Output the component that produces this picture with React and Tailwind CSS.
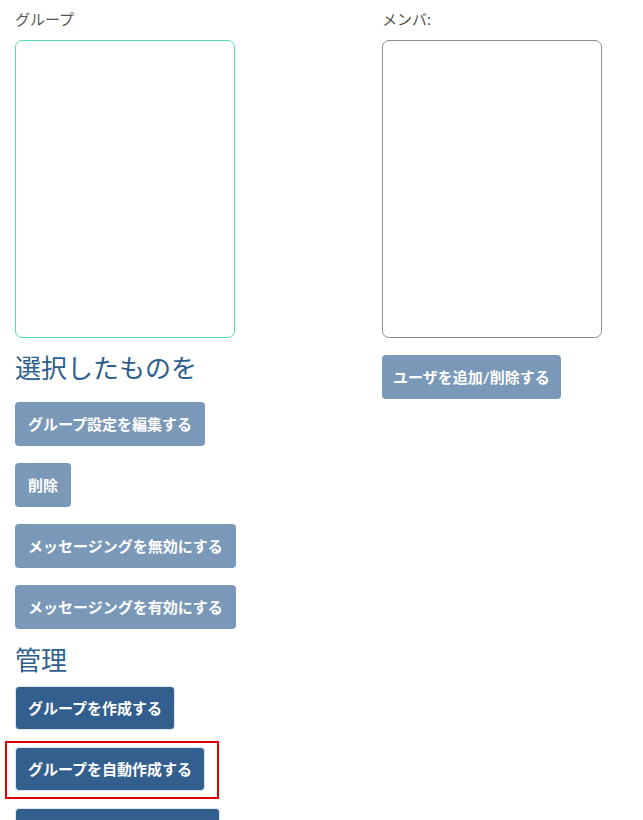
import React from 'react';

const font = { fontFamily: 'Lato, "Noto Sans CJK JP", sans-serif' };

const LightButton = ({ children }) => (
  <button className="h-[44px] px-[13px] rounded-[4px] bg-[#7a98b8] text-white text-[15px] font-bold leading-none whitespace-nowrap">
    {children}
  </button>
);

const DarkButton = ({ children }) => (
  <button className="h-[44px] px-[12px] rounded-[4px] border border-[#dfe6ee] bg-[#335f8f] text-white text-[15px] font-bold leading-none whitespace-nowrap">
    {children}
  </button>
);

const App = () => {
  return (
    <div className="w-[643px] h-[820px] overflow-hidden bg-white px-[15px] pt-[7px]" style={font}>
      <div className="flex">
        {/* left column */}
        <div className="w-[367px] flex flex-col items-start">
          <label className="text-[15px] leading-[25px] text-[#555] mb-[8px]">グループ</label>
          <div className="w-[220px] h-[298px] rounded-[7px] border border-[#52e0b4]" />

          <h2 className="mt-[12px] mb-[16px] text-[26px] leading-[36px] text-[#2e5e8e]">選択したものを</h2>
          <div className="flex flex-col items-start gap-[17px]">
            <LightButton>グループ設定を編集する</LightButton>
            <LightButton>削除</LightButton>
            <LightButton>メッセージングを無効にする</LightButton>
            <LightButton>メッセージングを有効にする</LightButton>
          </div>

          <h2 className="mt-[13px] mb-[8px] text-[26px] leading-[36px] text-[#2e5e8e]">管理</h2>
          <div className="flex flex-col items-start gap-[17px]">
            <DarkButton>グループを作成する</DarkButton>
            <div className="relative">
              <DarkButton>グループを自動作成する</DarkButton>
              <div className="absolute left-[-10px] top-[-6px] w-[214px] h-[58px] border-2 border-[#e00000] pointer-events-none" />
            </div>
            <DarkButton>グループをインポートする</DarkButton>
          </div>
        </div>

        {/* right column */}
        <div className="w-[220px] flex flex-col items-start">
          <label className="text-[15px] leading-[25px] text-[#555] mb-[8px]">メンバ:</label>
          <div className="w-[220px] h-[298px] rounded-[7px] border border-[#8a8e96]" />
          <div className="mt-[17px]">
            <button className="h-[44px] px-[11px] rounded-[4px] bg-[#7a98b8] text-white text-[15px] font-bold leading-none whitespace-nowrap">
              ユーザを追加/削除する
            </button>
          </div>
        </div>
      </div>
    </div>
  );
};

export default App;
